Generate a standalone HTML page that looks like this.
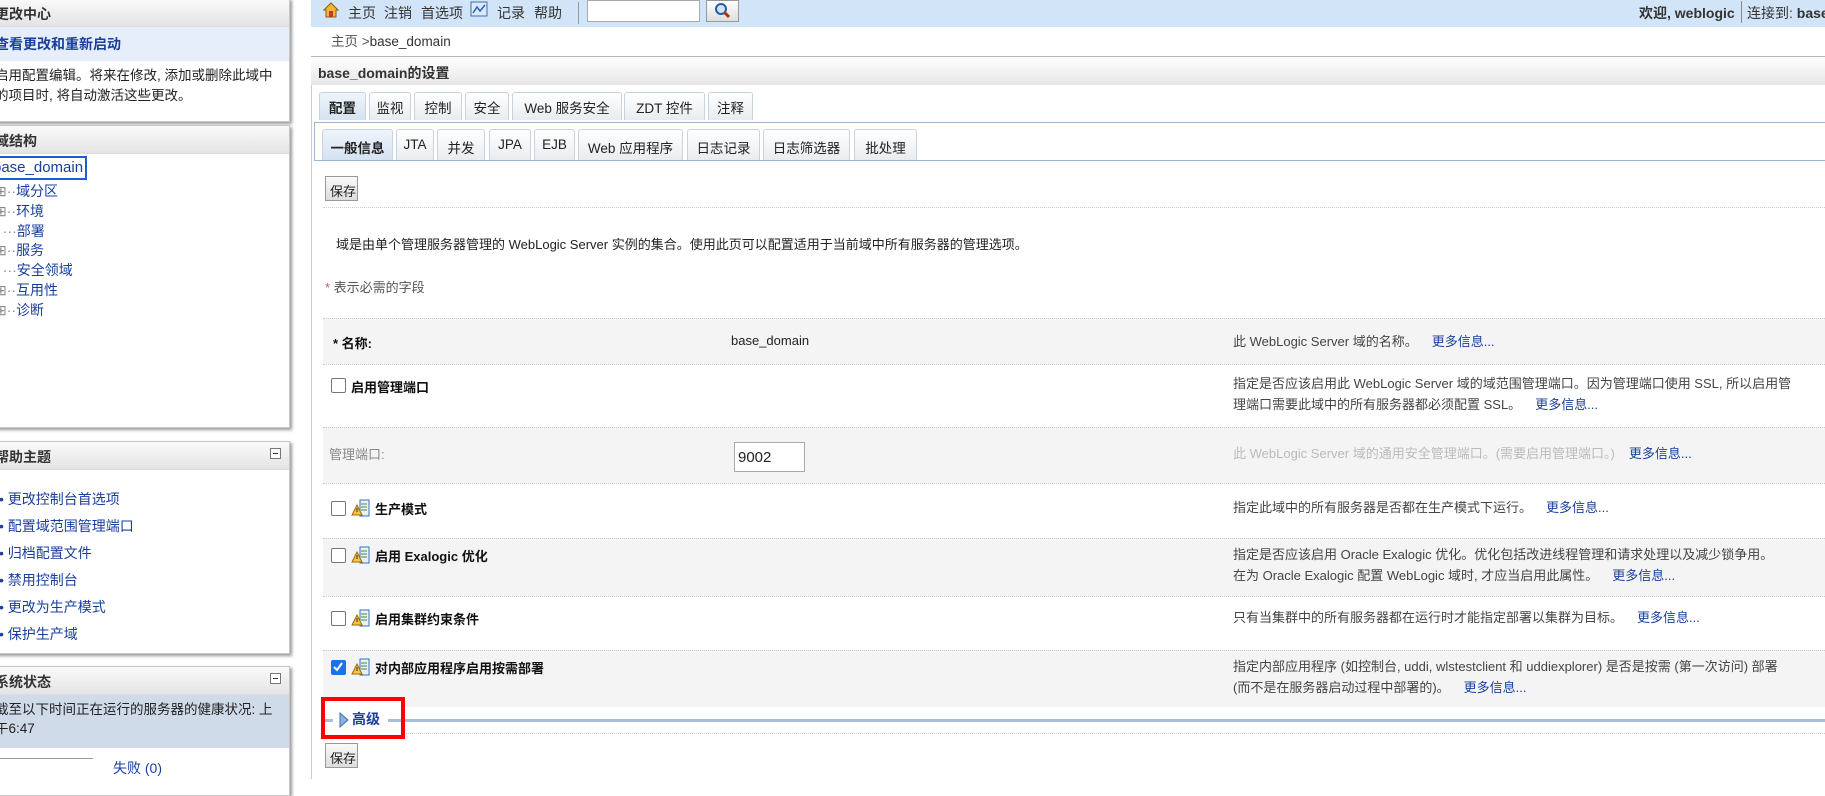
<!DOCTYPE html>
<html><head><meta charset="utf-8"><style>
*{box-sizing:border-box;margin:0;padding:0}
body{width:1825px;height:779px;overflow:hidden;background:#fff;font-family:"Liberation Sans","Noto Sans CJK SC",sans-serif;font-size:13px;color:#222;position:relative}
.a{position:absolute;white-space:nowrap}
.pnl{position:absolute;left:-12px;width:302px;background:#fff;border:1px solid #c8c8c8;box-shadow:2px 2px 3px #999}
.ph{height:28px;background:linear-gradient(#fafafa,#e4e4e4);border-bottom:1px solid #ddd;font-weight:bold;font-size:14px;color:#333;padding:5px 0 0 6px;position:relative}
.mn{position:absolute;right:8px;top:6px;width:11px;height:11px;border:1px solid #777;background:#fff}
.mn:after{content:"";position:absolute;left:2px;top:4px;width:5px;height:1px;background:#333}
.lk{color:#1a3f9b}
.tab{position:absolute;top:92px;height:28px;border:1px solid #c9d3df;border-bottom:none;background:linear-gradient(#fff,#e8ecf0);border-radius:3px 3px 0 0;font-size:13.5px;padding-top:4px;text-align:center}
.st{position:absolute;top:129px;height:31px;border:1px solid #c9d3df;border-bottom:none;background:linear-gradient(#fff,#e9ecef);border-radius:3px 3px 0 0;font-size:13.5px;padding-top:7px;text-align:center}
.btn{position:absolute;left:325px;width:33px;height:25px;border:1px solid #999;background:linear-gradient(#fafafa,#ddd);font-size:13px;padding:4px 0 0 4px}
.row{position:absolute;left:323px;width:1502px;border-top:1px dotted #ccc}
.g{background:#f4f4f4}
.lb{position:absolute;left:10px;font-weight:bold;font-size:13px;color:#111}
.ds{position:absolute;left:910px;font-size:13px;color:#444;line-height:21px}
.ds a{color:#1a3f9b;margin-left:14px;text-decoration:none}
.cb{position:absolute;left:8px;width:15px;height:15px;border:1.5px solid #777;border-radius:2px;background:#fff}
.ic{position:absolute;left:28px;width:20px;height:20px}
</style></head><body>

<div class="pnl" style="top:-2px;height:124px">
 <div class="ph">更改中心</div>
 <div style="background:#e7eefb;height:34px;padding:7px 0 0 6px;font-weight:bold;font-size:14px" class="lk">查看更改和重新启动</div>
 <div style="padding:5px 0 0 6px;font-size:13.5px;line-height:20px;color:#222">启用配置编辑。将来在修改, 添加或删除此域中<br>的项目时, 将自动激活这些更改。</div>
</div>
<div class="pnl" style="top:125px;height:303px">
 <div class="ph">域结构</div>
 <div style="position:absolute;left:0px;top:30px;border:2px solid #1a5fd0;padding:0 2px;font-size:15px;color:#1a3f9b;height:24px;line-height:20px">base_domain</div>
 <div style="position:absolute;left:6px;top:56px;font-size:14px;line-height:19.8px;color:#1a3f9b">
  <div><span style="color:#888">⊞··</span>域分区</div><div><span style="color:#888">⊞··</span>环境</div><div><span style="color:#888">&nbsp;&nbsp;···</span>部署</div><div><span style="color:#888">⊞··</span>服务</div><div><span style="color:#888">&nbsp;&nbsp;···</span>安全领域</div><div><span style="color:#888">⊞··</span>互用性</div><div><span style="color:#888">⊞··</span>诊断</div>
 </div>
</div>
<div class="pnl" style="top:441px;height:213px">
 <div class="ph">帮助主题<span class="mn"></span></div>
 <div style="position:absolute;left:10px;top:44px;font-size:14px;line-height:27px" class="lk">
  <div>• 更改控制台首选项</div><div>• 配置域范围管理端口</div><div>• 归档配置文件</div><div>• 禁用控制台</div><div>• 更改为生产模式</div><div>• 保护生产域</div>
 </div>
</div>
<div class="pnl" style="top:666px;height:130px">
 <div class="ph">系统状态<span class="mn"></span></div>
 <div style="background:#d0dbea;height:53px;padding:5px 0 0 6px;font-size:13.5px;line-height:19px">截至以下时间正在运行的服务器的健康状况: 上<br>午6:47</div>
 <div style="position:absolute;left:10px;top:91px;width:94px;border-top:1px solid #999"></div>
 <div class="a lk" style="left:124px;top:91px;font-size:14px">失败 (0)</div>
</div>

<div class="a" style="left:311px;top:0;width:1514px;height:27px;background:#d2e4f8"></div>
<svg class="a" style="left:322px;top:1px" width="18" height="18" viewBox="0 0 18 18"><path d="M2 9 L9 2 L16 9 L14 9 L14 16 L4 16 L4 9Z" fill="#f3b53a" stroke="#8a5a10"/><rect x="7" y="10" width="4" height="6" fill="#c0392b"/></svg>
<div class="a" style="left:348px;top:3px;font-size:14px;color:#333">主页</div>
<div class="a" style="left:384px;top:3px;font-size:14px;color:#333">注销</div>
<div class="a" style="left:421px;top:3px;font-size:14px;color:#333">首选项</div>
<svg class="a" style="left:470px;top:1px" width="18" height="17"><rect x="1" y="1" width="16" height="14" fill="#dbe9f9" stroke="#3b6fb5"/><path d="M3 12 L7 6 L10 10 L15 4" stroke="#2a5fc0" fill="none" stroke-width="1.5"/></svg>
<div class="a" style="left:497px;top:3px;font-size:14px;color:#333">记录</div>
<div class="a" style="left:534px;top:3px;font-size:14px;color:#333">帮助</div>
<div class="a" style="left:578px;top:2px;width:1px;height:22px;background:#999"></div>
<div class="a" style="left:587px;top:0;width:113px;height:22px;background:#fff;border:1px solid #aaa"></div>
<div class="a" style="left:706px;top:0;width:33px;height:22px;background:linear-gradient(#fff,#ddd);border:1px solid #999"></div>
<svg class="a" style="left:714px;top:2px" width="18" height="18"><circle cx="7" cy="7" r="5" fill="#cfe3f5" stroke="#2a5a9a" stroke-width="2"/><path d="M10.5 10.5 L15 15" stroke="#b03010" stroke-width="3"/></svg>
<div class="a" style="left:1639px;top:3px;font-size:14px;font-weight:bold;color:#333">欢迎, weblogic</div>
<div class="a" style="left:1741px;top:1px;width:1px;height:22px;background:#888"></div>
<div class="a" style="left:1747px;top:3px;font-size:14px;color:#333">连接到: <b>base_domain</b></div>

<div class="a" style="left:311px;top:56px;width:1px;height:723px;background:#ccc"></div>
<div class="a" style="left:331px;top:30px;font-size:13.5px;color:#555">主页 &gt;<span style="color:#333">base_domain</span></div>
<div class="a" style="left:311px;top:56px;width:1514px;height:29px;background:linear-gradient(#fff,#e6e7e6);border-top:1px solid #bbb;font-weight:bold;font-size:14px;padding:6px 0 0 7px;color:#333">base_domain的设置</div>

<div class="tab" style="left:319px;width:47px;background:linear-gradient(#eef4fb,#d5e2f1);font-weight:bold">配置</div>
<div class="tab" style="left:369px;width:42px">监视</div>
<div class="tab" style="left:414px;width:48px">控制</div>
<div class="tab" style="left:465px;width:44px">安全</div>
<div class="tab" style="left:512px;width:110px">Web 服务安全</div>
<div class="tab" style="left:624px;width:81px">ZDT 控件</div>
<div class="tab" style="left:708px;width:45px">注释</div>
<div class="a" style="left:314px;top:122px;width:1511px;height:39px;border:1px solid #9ab6d3;border-right:none"></div>
<div class="st" style="left:322px;width:71px;background:linear-gradient(#eef4fb,#d5e2f1);font-weight:bold">一般信息</div>
<div class="st" style="left:396px;width:38px">JTA</div>
<div class="st" style="left:437px;width:48px">并发</div>
<div class="st" style="left:489px;width:42px">JPA</div>
<div class="st" style="left:534px;width:41px">EJB</div>
<div class="st" style="left:578px;width:105px">Web 应用程序</div>
<div class="st" style="left:687px;width:73px">日志记录</div>
<div class="st" style="left:763px;width:87px">日志筛选器</div>
<div class="st" style="left:854px;width:63px">批处理</div>

<div class="btn" style="top:176px">保存</div>
<div class="a" style="left:323px;top:207px;width:1502px;border-top:1px dotted #ccc"></div>
<div class="a" style="left:336px;top:234px;font-size:13px;color:#222">域是由单个管理服务器管理的 WebLogic Server 实例的集合。使用此页可以配置适用于当前域中所有服务器的管理选项。</div>
<div class="a" style="left:325px;top:277px;font-size:13px;color:#555"><span style="color:#a66">*</span> 表示必需的字段</div>

<div class="row g" style="top:318px;height:46px"><div class="lb" style="top:14px">* 名称:</div><div class="a" style="left:408px;top:14px;font-size:13px">base_domain</div><div class="ds" style="top:12px">此 WebLogic Server 域的名称。<a>更多信息...</a></div></div>
<div class="row" style="top:364px;height:63px"><div class="cb" style="top:13px"></div><div class="lb" style="left:28px;top:12px">启用管理端口</div><div class="ds" style="top:8px">指定是否应该启用此 WebLogic Server 域的域范围管理端口。因为管理端口使用 SSL, 所以启用管<br>理端口需要此域中的所有服务器都必须配置 SSL。<a>更多信息...</a></div></div>
<div class="row g" style="top:427px;height:56px"><div class="a" style="left:6px;top:16px;font-size:13px;color:#888">管理端口:</div><div class="a" style="left:411px;top:14px;width:71px;height:30px;border:1px solid #aaa;background:#fff;font-size:15px;padding:6px 0 0 3px">9002</div><div class="ds" style="top:15px;color:#bbb">此 WebLogic Server 域的通用安全管理端口。(需要启用管理端口。)<a>更多信息...</a></div></div>
<div class="row" style="top:483px;height:55px"><div class="cb" style="top:17px"></div><svg class="ic" style="top:14px" viewBox="0 0 20 20"><rect x="9" y="2" width="9" height="16" fill="#e8f0fa" stroke="#3b6fb5"/><path d="M10 6h6M10 9h6M10 12h6" stroke="#4a8a3a"/><path d="M6 7 L11 17 L1 17Z" fill="#f5c242" stroke="#a06a10"/><path d="M6 10v4" stroke="#333"/></svg><div class="lb" style="left:52px;top:15px">生产模式</div><div class="ds" style="top:13px">指定此域中的所有服务器是否都在生产模式下运行。<a>更多信息...</a></div></div>
<div class="row g" style="top:538px;height:58px"><div class="cb" style="top:9px"></div><svg class="ic" style="top:6px" viewBox="0 0 20 20"><rect x="9" y="2" width="9" height="16" fill="#e8f0fa" stroke="#3b6fb5"/><path d="M10 6h6M10 9h6M10 12h6" stroke="#4a8a3a"/><path d="M6 7 L11 17 L1 17Z" fill="#f5c242" stroke="#a06a10"/><path d="M6 10v4" stroke="#333"/></svg><div class="lb" style="left:52px;top:7px">启用 Exalogic 优化</div><div class="ds" style="top:5px">指定是否应该启用 Oracle Exalogic 优化。优化包括改进线程管理和请求处理以及减少锁争用。<br>在为 Oracle Exalogic 配置 WebLogic 域时, 才应当启用此属性。<a>更多信息...</a></div></div>
<div class="row" style="top:596px;height:54px"><div class="cb" style="top:14px"></div><svg class="ic" style="top:11px" viewBox="0 0 20 20"><rect x="9" y="2" width="9" height="16" fill="#e8f0fa" stroke="#3b6fb5"/><path d="M10 6h6M10 9h6M10 12h6" stroke="#4a8a3a"/><path d="M6 7 L11 17 L1 17Z" fill="#f5c242" stroke="#a06a10"/><path d="M6 10v4" stroke="#333"/></svg><div class="lb" style="left:52px;top:12px">启用集群约束条件</div><div class="ds" style="top:10px">只有当集群中的所有服务器都在运行时才能指定部署以集群为目标。<a>更多信息...</a></div></div>
<div class="row g" style="top:650px;height:57px"><div class="cb" style="top:9px;background:#1a73e8;border-color:#1a73e8"><svg width="12" height="12" style="position:absolute;left:0;top:0"><path d="M2 6 L5 9 L10 2" stroke="#fff" stroke-width="2" fill="none"/></svg></div><svg class="ic" style="top:6px" viewBox="0 0 20 20"><rect x="9" y="2" width="9" height="16" fill="#e8f0fa" stroke="#3b6fb5"/><path d="M10 6h6M10 9h6M10 12h6" stroke="#4a8a3a"/><path d="M6 7 L11 17 L1 17Z" fill="#f5c242" stroke="#a06a10"/><path d="M6 10v4" stroke="#333"/></svg><div class="lb" style="left:52px;top:7px">对内部应用程序启用按需部署</div><div class="ds" style="top:5px">指定内部应用程序 (如控制台, uddi, wlstestclient 和 uddiexplorer) 是否是按需 (第一次访问) 部署<br>(而不是在服务器启动过程中部署的)。<a>更多信息...</a></div></div>

<div class="a" style="left:323px;top:719px;width:1502px;height:3px;background:#a9bfd8"></div>
<div class="a" style="left:323px;top:733px;width:1502px;border-top:1px dotted #ccc"></div>
<div class="a" style="left:321px;top:697px;width:84px;height:42px;border:4px solid #f00;background:#fff"></div>
<div class="a" style="left:325px;top:719px;width:8px;height:3px;background:#a9bfd8"></div>
<div class="a" style="left:388px;top:719px;width:13px;height:3px;background:#a9bfd8"></div>
<svg class="a" style="left:339px;top:712px" width="10" height="16"><path d="M1 1 L9 8 L1 15Z" fill="#8fb0dc" stroke="#3b6fb5"/></svg>
<div class="a" style="left:352px;top:709px;font-size:14px;font-weight:bold;color:#1a3f9b">高级</div>
<div class="btn" style="top:743px">保存</div>
</body></html>
